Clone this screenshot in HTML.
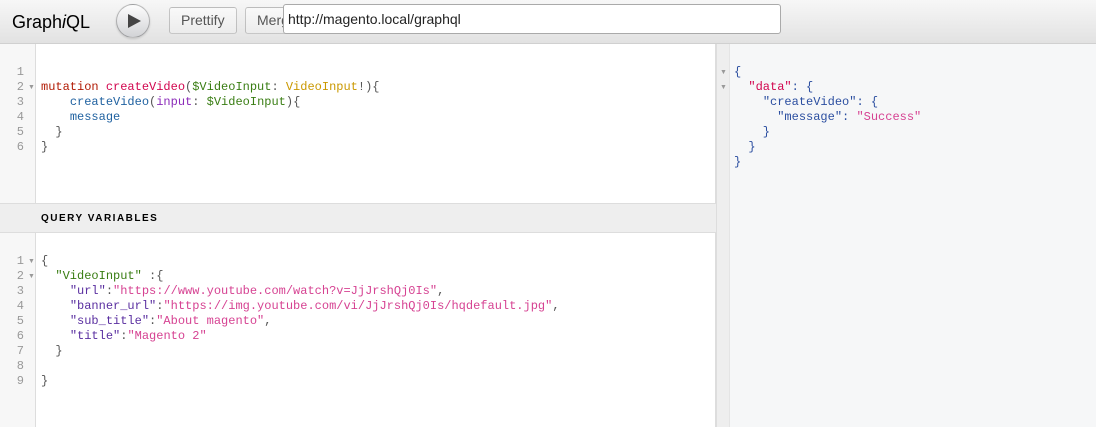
<!DOCTYPE html>
<html><head><meta charset="utf-8"><style>
*{margin:0;padding:0;box-sizing:border-box}
body{width:1096px;height:427px;overflow:hidden;background:#fff;font-family:"Liberation Sans",sans-serif;position:relative}
.tb{position:absolute;left:0;top:0;width:1096px;height:44px;background:linear-gradient(#f7f7f7,#e2e2e2);border-bottom:1px solid #d0d0d0}
.logo{position:absolute;left:12px;top:12px;font-size:18px;color:#000}
.run{position:absolute;left:116px;top:4px;width:34px;height:34px;border-radius:50%;background:linear-gradient(#fdfdfd,#d2d3d6);border:1px solid rgba(0,0,0,.25);box-shadow:0 1px 2px rgba(0,0,0,.15)}
.run svg{position:absolute;left:11px;top:9px}
.btn{position:absolute;top:7px;height:27px;border:1px solid rgba(0,0,0,.2);border-radius:3px;background:linear-gradient(#f9f9f9,#ececec);font-size:14px;color:#555;padding:5px 11px;line-height:15px}
.url{position:absolute;left:283px;top:4px;width:498px;height:30px;background:#fff;border:1px solid #aaa;border-radius:3px;font-size:14px;padding:6px 4px;color:#222}
.left{position:absolute;left:0;top:44px;width:716px;height:383px;background:#fff;border-right:1px solid #ddd}
.gut{position:absolute;left:0;width:36px;background:#f7f7f7;border-right:1px solid #ddd}
.code{position:absolute;font-family:"Liberation Mono",monospace;font-size:12px;line-height:15px;white-space:pre;color:#555}
.ln{position:absolute;font-family:"Liberation Mono",monospace;font-size:12px;line-height:15px;white-space:pre;color:#999;text-align:right;width:24px;left:0}
.arr{position:absolute;font-size:7px;color:#999}
.qv{position:absolute;left:0;top:203px;width:716px;height:30px;background:#eee;border-top:1px solid #ddd;border-bottom:1px solid #ddd;font-size:10px;font-weight:bold;letter-spacing:1.5px;color:#000;padding:9px 0 0 41px}
.rg{position:absolute;left:716px;top:44px;width:14px;height:383px;background:#eee;border-left:1px solid #ddd;border-right:1px solid #e4e4e4}
.res{position:absolute;left:730px;top:44px;width:366px;height:383px;background:#f6f7f8}
.kw{color:#B11A04}.df{color:#D2054E}.vr{color:#397D13}.ty{color:#CA9800}.fd{color:#1F61A0}.ag{color:#8B2BB9}.st{color:#D64292}.pr{color:#2b4ea0}.pk{color:#5a2fa0}
</style></head><body>
<div class="tb">
<div class="logo">Graph<i>i</i>QL</div>
<div class="run"><svg width="13" height="14"><path d="M0 0L13 7L0 14Z" fill="#444"/></svg></div>
<div class="btn" style="left:169px">Prettify</div>
<div class="btn" style="left:245px;width:50px">Merge</div>
<div class="url">http://magento.local/graphql</div>
</div>
<div class="left">
<div class="gut" style="top:0;height:159px"></div>
<div class="gut" style="top:189px;height:194px"></div>
</div>
<div class="ln" style="top:65px">1
2
3
4
5
6</div>
<div class="arr" style="left:28px;top:84px">▼</div>
<div class="code" style="left:41px;top:80px"><span class="kw">mutation</span> <span class="df">createVideo</span>(<span class="vr">$VideoInput</span>: <span class="ty">VideoInput</span>!){
    <span class="fd">createVideo</span>(<span class="ag">input</span>: <span class="vr">$VideoInput</span>){
    <span class="fd">message</span>
  }
}</div>
<div class="qv">QUERY VARIABLES</div>
<div class="ln" style="top:254px">1
2
3
4
5
6
7
8
9</div>
<div class="arr" style="left:28px;top:258px">▼</div>
<div class="arr" style="left:28px;top:273px">▼</div>
<div class="code" style="left:41px;top:254px">{
  <span class="vr">"VideoInput"</span> :{
    <span class="pk">"url"</span>:<span class="st">"https://www.youtube.com/watch?v=JjJrshQj0Is"</span>,
    <span class="pk">"banner_url"</span>:<span class="st">"https://img.youtube.com/vi/JjJrshQj0Is/hqdefault.jpg"</span>,
    <span class="pk">"sub_title"</span>:<span class="st">"About magento"</span>,
    <span class="pk">"title"</span>:<span class="st">"Magento 2"</span>
  }

}</div>
<div class="rg"></div>
<div class="res"></div>
<div class="arr" style="left:720px;top:69px">▼</div>
<div class="arr" style="left:720px;top:84px">▼</div>
<div class="code" style="left:734px;top:65px;color:#2b4ea0">{
  <span class="df">"data"</span>: {
    <span class="pr">"createVideo"</span>: {
      <span class="pr">"message"</span>: <span class="st">"Success"</span>
    }
  }
}</div>
</body></html>
